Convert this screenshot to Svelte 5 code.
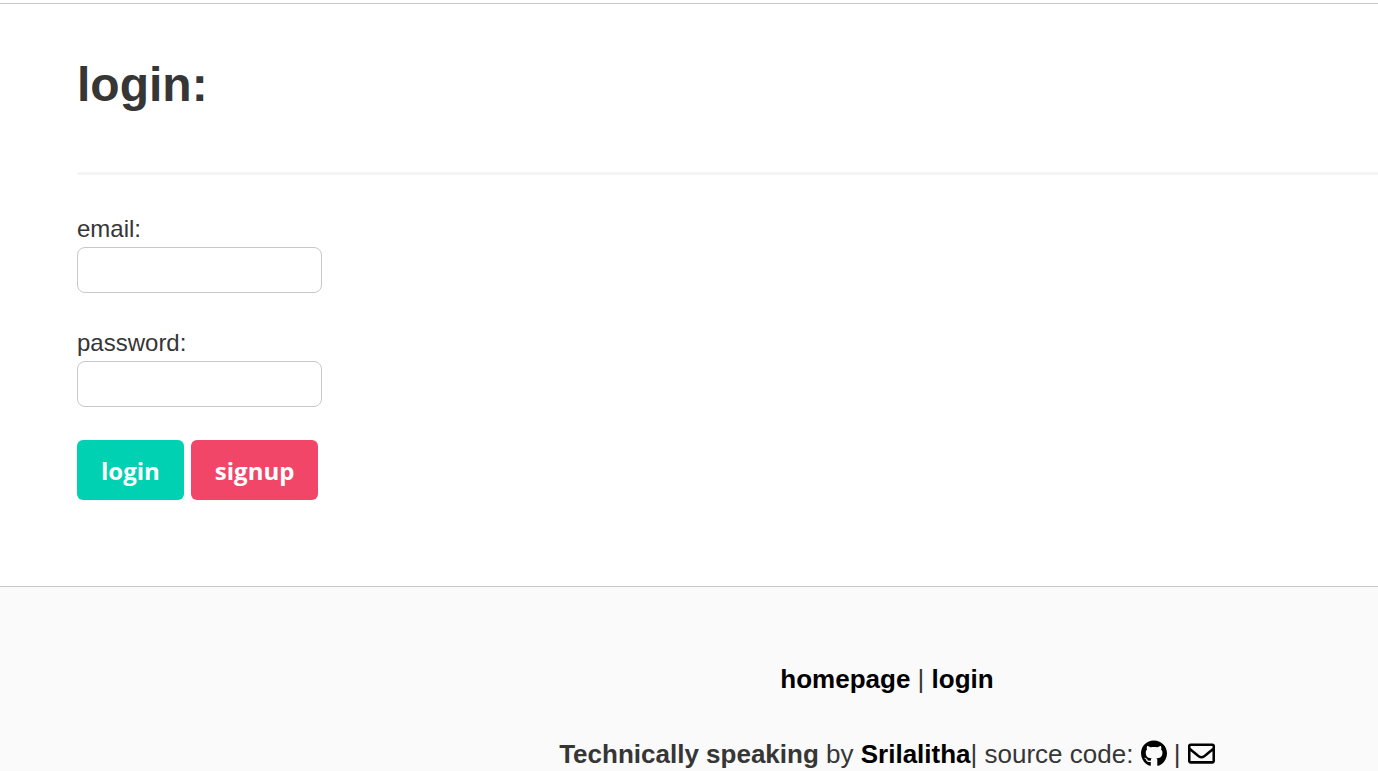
<script>
  let email = $state('');
  let password = $state('');
</script>

<main>
  <h1>login:</h1>
  <hr />
  <form onsubmit={(event) => event.preventDefault()}>
    <div class="field">
      <label for="email">email:</label>
      <input id="email" type="email" bind:value={email} />
    </div>
    <div class="field">
      <label for="password">password:</label>
      <input id="password" type="password" bind:value={password} />
    </div>
    <div class="actions">
      <button class="login" type="submit">login</button>
      <button class="signup" type="button">signup</button>
    </div>
  </form>
</main>

<footer>
  <p><a href="#home">homepage</a> | <a href="#login">login</a></p>
  <p>
    <strong>Technically speaking</strong> by <a href="#author">Srilalitha</a>| source code:
    <a href="#source" aria-label="GitHub"><svg class="github" viewBox="0 0 496 512" aria-hidden="true"><path d="M165.9 397.4c0 2-2.300 3.600-5.200 3.600-3.300.3-5.600-1.300-5.600-3.600 0-2 2.300-3.600 5.200-3.600 3-.3 5.600 1.300 5.600 3.600zm-31.100-4.500c-.7 2 1.300 4.300 4.300 4.900 2.600 1 5.600 0 6.200-2s-1.300-4.300-4.300-5.200c-2.600-.7-5.500.3-6.200 2.300zm44.200-1.700c-2.900.7-4.900 2.600-4.600 4.900.3 2 2.900 3.300 5.900 2.600 2.900-.7 4.900-2.600 4.600-4.600-.3-1.900-3-3.200-5.900-2.900zM244.800 8C106.100 8 0 113.300 0 252c0 110.900 69.800 205.800 169.500 239.200 12.800 2.300 17.300-5.600 17.300-12.100 0-6.200-.3-40.400-.3-61.400 0 0-70 15-84.700-29.800 0 0-11.400-29.100-27.800-36.600 0 0-22.900-15.700 1.600-15.400 0 0 24.900 2 38.600 25.800 21.900 38.600 58.600 27.500 72.900 20.900 2.300-16 8.800-27.100 16-33.700-55.900-6.200-112.300-14.300-112.300-110.500 0-27.500 7.600-41.300 23.600-58.900-2.600-6.500-11.100-33.300 2.600-67.900 20.900-6.500 69 27 69 27 20-5.600 41.500-8.500 62.800-8.500s42.800 2.900 62.800 8.500c0 0 48.100-33.600 69-27 13.700 34.700 5.200 61.400 2.600 67.900 16 17.700 25.800 31.500 25.800 58.900 0 96.500-58.900 104.200-114.800 110.500 9.200 7.900 17 22.900 17 46.400 0 33.700-.3 75.400-.3 83.600 0 6.500 4.600 14.400 17.300 12.100C428.200 457.800 496 362.900 496 252 496 113.300 383.500 8 244.800 8zM97.200 352.900c-1.300 1-1 3.300.7 5.200 1.600 1.600 3.900 2.300 5.200 1 1.300-1 1-3.300-.7-5.200-1.600-1.600-3.900-2.300-5.200-1zm-10.800-8.100c-.7 1.300.3 2.900 2.300 3.900 1.600 1 3.600.7 4.300-.7.7-1.300-.3-2.900-2.300-3.900-2-.6-3.600-.3-4.300.7zm32.400 35.600c-1.600 1.300-1 4.300 1.300 6.200 2.300 2.300 5.200 2.600 6.500 1 1.300-1.300.7-4.300-1.300-6.200-2.200-2.300-5.200-2.600-6.500-1zm-11.400-14.700c-1.600 1-1.600 3.600 0 5.900s4.300 3.300 5.600 2.300c1.600-1.300 1.600-3.900 0-6.200-1.400-2.300-4-3.300-5.600-2z" /></svg></a>
    |
    <a href="#mail" aria-label="Email"><svg class="mail" viewBox="0 0 512 512" aria-hidden="true"><path d="M464 64H48C21.490 64 0 85.490 0 112v288c0 26.510 21.490 48 48 48h416c26.510 0 48-21.490 48-48V112c0-26.510-21.490-48-48-48zm0 48v40.805c-22.422 18.259-58.168 46.651-134.587 106.490-16.841 13.247-50.201 45.072-73.413 44.701-23.208.375-56.579-31.459-73.413-44.701C106.180 199.465 70.425 171.067 48 152.805V112h416zM48 400V214.398c22.914 18.251 55.409 43.862 104.938 82.646 21.857 17.205 60.134 55.186 103.062 54.955 42.717.231 80.509-37.199 103.053-54.947 49.528-38.783 82.032-64.401 104.947-82.653V400H48z" /></svg></a>
  </p>
</footer>

<style>
  :global(body) {
    margin: 0;
    background: #fff;
    color: #363636;
    font-family: "Liberation Sans", Arial, sans-serif;
    font-size: 24px;
    line-height: 36px;
  }

  main {
    margin-top: 3px;
    padding: 45px 0 86px 77px;
    border-top: 1px solid #c8c8c8;
    border-bottom: 1px solid #c8c8c8;
  }

  h1 {
    margin: 0;
    font-size: 48px;
    line-height: 72px;
  }

  hr {
    height: 3px;
    margin: 51px 0 36px;
    border: 0;
    background: #f5f5f5;
  }

  form {
    display: flex;
    flex-direction: column;
    gap: 32px;
  }

  .field {
    display: flex;
    flex-direction: column;
    align-items: flex-start;
  }

  input {
    box-sizing: border-box;
    width: 245px;
    max-width: 100%;
    height: 46px;
    padding: 0 12px;
    border: 1px solid #c8c8c8;
    border-radius: 8px;
    background: #fff;
    color: inherit;
    font: inherit;
  }

  .actions {
    display: flex;
    gap: 7px;
    padding-top: 1px;
  }

  button {
    height: 60px;
    padding: 2px 24px 0;
    border: 0;
    border-radius: 6px;
    color: #fff;
    font: 700 24px/36px "Open Sans", sans-serif;
    cursor: pointer;
  }

  .login {
    background: #00d1b2;
  }

  .signup {
    background: #f14668;
  }

  footer {
    padding: 73px 0 0 396px;
    background: #fafafa;
    font-size: 26px;
    line-height: 39px;
    text-align: center;
  }

  footer p {
    margin: 0 0 36px;
  }

  footer p:last-child {
    margin: 0;
  }

  a {
    color: #000;
    font-weight: 700;
    text-decoration: none;
  }

  svg {
    height: 27px;
    fill: currentColor;
    vertical-align: -4px;
  }

  .github {
    width: 26px;
  }

  .mail {
    width: 27px;
  }
</style>
